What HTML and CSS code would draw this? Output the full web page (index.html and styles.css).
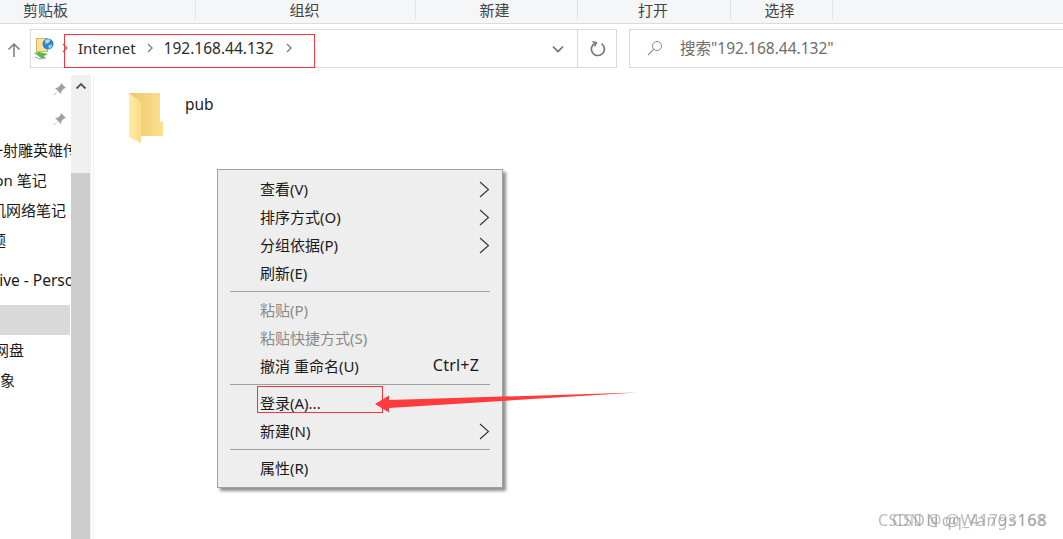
FILE: index.html
```html
<!DOCTYPE html>
<html lang="zh">
<head>
<meta charset="utf-8">
<title>192.168.44.132</title>
<link rel="stylesheet" href="styles.css">
</head>
<body>
<div class="window">
  <div class="ribbon">
    <div class="group g1">剪贴板</div>
    <div class="group g2">组织</div>
    <div class="group g3">新建</div>
    <div class="group g4">打开</div>
    <div class="group g5">选择</div>
  </div>
  <div class="navrow">
    <svg class="up" width="14" height="16" viewBox="0 0 14 16"><path d="M7 15V2M1.500 7.500L7 2l5.500 5.500" fill="none" stroke="#7a7a7a" stroke-width="1.500"/></svg>
    <div class="address">
      <svg class="addr-icon" width="22" height="24" viewBox="0 0 22 24">
        <rect x="3.500" y="1.500" width="11" height="13" fill="#f8e39a" stroke="#d2b45c"/>
        <circle cx="15" cy="7" r="5.500" fill="#2f86c8"/>
        <path d="M12 3.500c2-1.500 4-1.500 5.500-.5l-2 3-3 1zM15.500 8.500l3-1 .5 2-3 2.500z" fill="#a9dcef"/>
        <path d="M1 16l5-1 9 2-4 2 1 2-4 0-4-3z" fill="#57b947"/>
        <path d="M2 20l5 2 6-1" fill="none" stroke="#9aa59a"/>
      </svg>
      <svg class="chev first" width="6" height="10" viewBox="0 0 6 10"><path d="M1 1l4 4-4 4" fill="none" stroke="#7f7f7f" stroke-width="1.400"/></svg>
      <span class="crumb c1">Internet</span>
      <svg class="chev" width="6" height="10" viewBox="0 0 6 10"><path d="M1 1l4 4-4 4" fill="none" stroke="#7f7f7f" stroke-width="1.400"/></svg>
      <span class="crumb c2">192.168.44.132</span>
      <svg class="chev" width="6" height="10" viewBox="0 0 6 10"><path d="M1 1l4 4-4 4" fill="none" stroke="#7f7f7f" stroke-width="1.400"/></svg>
      <svg class="drop" width="12" height="8" viewBox="0 0 12 8"><path d="M1 1.500l5 5 5-5" fill="none" stroke="#6d6d6d" stroke-width="1.600"/></svg>
      <div class="refresh">
        <svg width="16" height="17" viewBox="0 0 16 17"><path d="M5 3.200A6.500 6.500 0 1 0 11.500 3.600" fill="none" stroke="#777" stroke-width="1.700"/><path d="M2.500 1.500L6.500 3 4.500 6.500" fill="none" stroke="#777" stroke-width="1.500"/></svg>
      </div>
    </div>
    <div class="search">
      <svg class="search-icon" width="16" height="16" viewBox="0 0 16 16"><circle cx="10" cy="6" r="4.500" fill="none" stroke="#8a8a8a"/><path d="M6.800 9.200L1 15" stroke="#a08a80" stroke-width="1.100"/></svg>
      <span class="search-text">搜索"192.168.44.132"</span>
    </div>
  </div>
  <div class="main">
    <div class="sidebar">
      <div class="row pin"><svg width="14" height="14" viewBox="0 0 14 14"><path d="M8 1l5 5-2 .5-2.500 2.500-.5 3-3-3-3.500 4-.5-.5 4-3.500-3-3 3-.5L7.500 3z" fill="#9aa0a6"/></svg></div>
      <div class="row pin"><svg width="14" height="14" viewBox="0 0 14 14"><path d="M8 1l5 5-2 .5-2.500 2.500-.5 3-3-3-3.500 4-.5-.5 4-3.500-3-3 3-.5L7.500 3z" fill="#9aa0a6"/></svg></div>
      <div class="row"><span class="label l1">一射雕英雄传</span></div>
      <div class="row"><span class="label l2">Python 笔记</span></div>
      <div class="row"><span class="label l3">机网络笔记</span></div>
      <div class="row"><span class="label l4">主题</span></div>
      <div class="row spaced"><span class="label l5">OneDrive - Personal</span></div>
      <div class="row spaced selected"></div>
      <div class="row"><span class="label l6">网盘</span></div>
      <div class="row"><span class="label l7">对象</span></div>
    </div>
    <div class="scrollbar">
      <div class="scroll-up"><svg width="12" height="8" viewBox="0 0 12 8"><path d="M1.500 6.500L6 2l4.500 4.500" fill="none" stroke="#555" stroke-width="1.800"/></svg></div>
      <div class="thumb"></div>
    </div>
    <div class="content">
      <div class="file">
        <svg class="folder" width="36" height="52" viewBox="0 0 36 52">
          <defs>
            <linearGradient id="back" x1="0" x2="1" y1="0" y2="0"><stop offset="0" stop-color="#edc768"/><stop offset="1" stop-color="#fbe08f"/></linearGradient>
            <linearGradient id="front" x1="0" x2="1" y1="0" y2="0"><stop offset="0" stop-color="#ffeaa6"/><stop offset="1" stop-color="#fbdc87"/></linearGradient>
          </defs>
          <path d="M1 1h31v28l3 1v14H12L1 40z" fill="url(#back)"/>
          <path d="M1 1l12 9v41L1 45z" fill="url(#front)"/>
        </svg>
        <span class="file-name">pub</span>
      </div>
    </div>
  </div>
</div>

<div class="menu">
  <div class="item"><span>查看(V)</span><svg class="arrow" width="11" height="17" viewBox="0 0 11 17"><path d="M1 1l8.500 7.500L1 16" fill="none" stroke="#3b3030" stroke-width="1.100"/></svg></div>
  <div class="item"><span>排序方式(O)</span><svg class="arrow" width="11" height="17" viewBox="0 0 11 17"><path d="M1 1l8.500 7.500L1 16" fill="none" stroke="#3b3030" stroke-width="1.100"/></svg></div>
  <div class="item"><span>分组依据(P)</span><svg class="arrow" width="11" height="17" viewBox="0 0 11 17"><path d="M1 1l8.500 7.500L1 16" fill="none" stroke="#3b3030" stroke-width="1.100"/></svg></div>
  <div class="item"><span>刷新(E)</span></div>
  <div class="sep"></div>
  <div class="item disabled"><span>粘贴(P)</span></div>
  <div class="item disabled"><span>粘贴快捷方式(S)</span></div>
  <div class="item"><span>撤消 重命名(U)</span><span class="shortcut">Ctrl+Z</span></div>
  <div class="sep"></div>
  <div class="item"><span>登录(A)...</span></div>
  <div class="item"><span>新建(N)</span><svg class="arrow" width="11" height="17" viewBox="0 0 11 17"><path d="M1 1l8.500 7.500L1 16" fill="none" stroke="#3b3030" stroke-width="1.100"/></svg></div>
  <div class="sep"></div>
  <div class="item"><span>属性(R)</span></div>
</div>

<div class="mark-addr"></div>
<div class="mark-login"></div>
<svg class="mark-arrow" width="264" height="22" viewBox="0 0 264 22"><path d="M1 12L15 3.500V8L263 0.500 15 16V20.500z" fill="#ff3b3b"/></svg>
<div class="wm wm1">CSDN @qq_41793168</div>
<div class="wm wm2">CSDN @Wangs168</div>
</body>
</html>
```
FILE: styles.css
```css
* { box-sizing: border-box; }
html, body { margin: 0; padding: 0; }
body {
  width: 1063px;
  height: 539px;
  overflow: hidden;
  position: relative;
  background: #fff;
  color: #1a1a1a;
  font-family: "Noto Sans", "Noto Sans CJK SC", sans-serif;
  font-size: 15px;
}
.window { display: flex; flex-direction: column; height: 539px; }

.ribbon {
  display: flex;
  height: 24px;
  flex: none;
  background: #f5f6f7;
  border-bottom: 1px solid #dcdcdc;
  color: #444;
  line-height: 20px;
  overflow: hidden;
}
.group { height: 20px; border-right: 1px solid #e2e3e5; text-align: center; }
.g1 { width: 196px; text-align: left; padding-left: 23px; }
.g2 { width: 220px; padding-right: 2px; }
.g3 { width: 162px; padding-right: 4px; }
.g4 { width: 153px; padding-right: 2px; }
.g5 { width: 102px; padding-right: 4px; }

.navrow {
  display: flex;
  align-items: flex-start;
  height: 51px;
  flex: none;
  padding-top: 5px;
}
.up { margin: 13px 9px 0 7px; flex: none; }
.address {
  display: flex;
  align-items: center;
  width: 587px;
  height: 39px;
  border: 1px solid #d9d9d9;
  padding-left: 2px;
  flex: none;
  font-size: 15px;
  color: #2b2b2b;
}
.addr-icon { flex: none; }
.chev { flex: none; margin-bottom: 2px; }
.chev.first { margin-left: 7px; }
.crumb { white-space: nowrap; padding-bottom: 2px; }
.c1 { margin-left: 10px; margin-right: 11px; }
.c2 { margin-left: 11px; margin-right: 12px; font-size: 15.500px; }
.drop { margin-left: auto; margin-right: 13px; }
.refresh {
  display: flex;
  align-items: center;
  justify-content: center;
  width: 39px;
  height: 37px;
  padding-left: 2px;
  border-left: 1px solid #d9d9d9;
  flex: none;
}
.search {
  display: flex;
  align-items: center;
  width: 440px;
  height: 39px;
  margin-left: 12px;
  border: 1px solid #d9d9d9;
  padding-left: 17px;
  flex: none;
  color: #6d6d6d;
  font-size: 15.500px;
}
.search-icon { flex: none; margin-bottom: 2px; }
.search-text { margin-left: 17px; white-space: nowrap; padding-bottom: 2px; }

.main { display: flex; flex: 1; min-height: 0; }
.sidebar { width: 71px; flex: none; overflow: hidden; }
.row {
  display: flex;
  align-items: center;
  height: 30px;
  width: 70px;
  padding-bottom: 2px;
  white-space: nowrap;
  color: #1a1a1a;
}
.row.spaced { margin-top: 10px; }
.row.pin { justify-content: flex-end; padding-right: 3px; }
.row.selected { background: #d9d9d9; }
.label { flex: none; }
.l1 { margin-left: -12px; }
.l2 { margin-left: -37px; }
.l3 { margin-left: -9px; }
.l4 { margin-left: -24px; }
.l5 { margin-left: -49px; font-size: 15.500px; padding-top: 1px; }
.l6 { margin-left: -6px; }
.l7 { margin-left: -15px; }

.scrollbar {
  width: 20px;
  flex: none;
  background: #f0f0f0;
  display: flex;
  flex-direction: column;
}
.scroll-up { height: 19px; display: flex; align-items: center; justify-content: center; margin-top: 1px; }
.thumb { flex: 1; margin-top: 78px; background: #cdcdcd; width: 19px; }

.content { flex: 1; margin-left: 2px; border-left: 1px solid #f0f0f0; padding: 17px 0 0 34px; }
.file { display: flex; align-items: flex-start; }
.folder { flex: none; }
.file-name { margin-left: 21px; font-size: 15.500px; line-height: 24px; color: #1a1a1a; }

.menu {
  position: absolute;
  left: 217px;
  top: 169px;
  width: 286px;
  height: 319px;
  padding: 5px 12px 5px 12px;
  background: #eeeeee;
  border: 1px solid #a0a0a0;
  box-shadow: 3px 3px 3px #8f8f8f;
}
.item {
  display: flex;
  align-items: center;
  justify-content: space-between;
  height: 28px;
  padding: 0 0 2px 30px;
  white-space: nowrap;
  color: #1a1a1a;
}
.item.disabled { color: #8a8a8a; }
.arrow { flex: none; margin-top: 2px; }
.shortcut { font-size: 16px; margin-right: 11px; letter-spacing: 0.200px; }
.sep { height: 1px; margin: 4px 0; background: #a0a0a0; }

.mark-addr {
  position: absolute;
  left: 64px;
  top: 34px;
  width: 251px;
  height: 34px;
  border: 1px solid #f0383c;
}
.mark-login {
  position: absolute;
  left: 257px;
  top: 386px;
  width: 126px;
  height: 27px;
  border: 1px solid #f0383c;
}
.mark-arrow { position: absolute; left: 374px; top: 392px; }

.wm {
  position: absolute;
  top: 509px;
  white-space: nowrap;
  color: rgba(140, 140, 140, 0.6);
  font-size: 16px;
  line-height: 22px;
  filter: blur(0.4px);
}
.wm1 { left: 878px; letter-spacing: 0.400px; }
.wm2 { left: 892px; letter-spacing: 1.200px; }
```
